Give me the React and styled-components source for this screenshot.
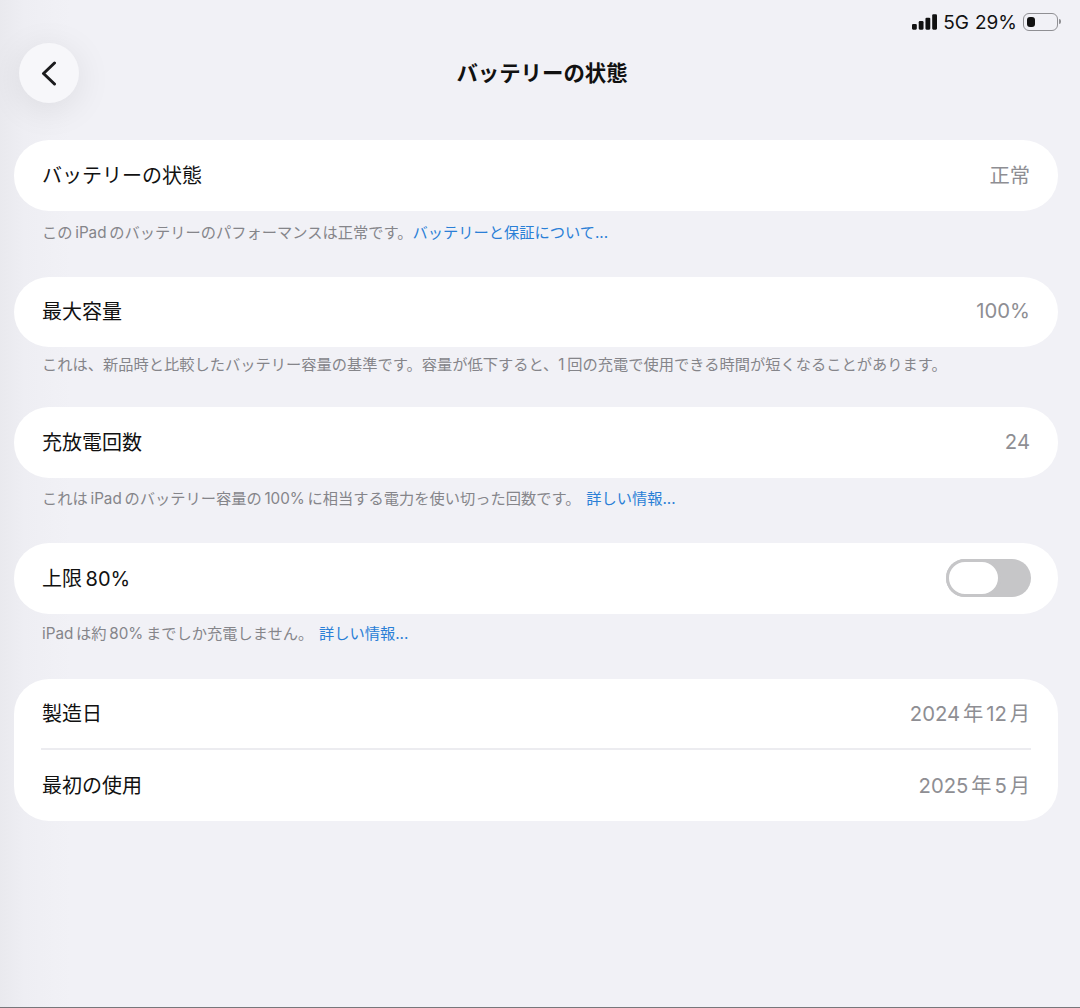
import React from 'react';
import styled, { createGlobalStyle } from 'styled-components';

const GlobalStyle = createGlobalStyle`
  html, body {
    margin: 0;
    padding: 0;
    background: #f1f1f6;
  }
  body {
    font-family: Inter, "Noto Sans CJK JP", sans-serif;
  }
  * {
    box-sizing: border-box;
  }
`;

const Page = styled.div`
  width: 1080px;
  height: 1008px;
  overflow: hidden;
  padding: 0 22px 0 14px;
  border-bottom: 1px solid #77777b;
  background: linear-gradient(to right, #e9e9ee 0, #eeeef3 24px, #f1f1f6 70px);
`;

const StatusBar = styled.div`
  height: 43px;
  padding-top: 1px;
  display: flex;
  align-items: center;
  justify-content: flex-end;
  gap: 6px;
  font-size: 19px;
  color: #111;
`;

const Battery = styled.div`
  position: relative;
  width: 35px;
  height: 18px;
  padding: 3px;
  border: 1.5px solid #8f8f93;
  border-radius: 6px;
  &::after {
    content: '';
    position: absolute;
    right: -4px;
    top: 5px;
    width: 2px;
    height: 5px;
    border-radius: 0 2px 2px 0;
    background: #8f8f93;
  }
`;

const BatteryLevel = styled.div`
  width: 8px;
  height: 100%;
  border-radius: 3px;
  background: #111;
`;

const Header = styled.header`
  display: grid;
  grid-template-columns: 60px 1fr 60px;
  align-items: center;
  height: 60px;
  margin: 0 -7px 37px 5px;
`;

const BackButton = styled.button`
  width: 60px;
  height: 60px;
  padding: 0;
  display: flex;
  align-items: center;
  justify-content: center;
  border: 0;
  border-radius: 50%;
  background: #f7f7fa;
  box-shadow: 0 6px 36px rgba(0, 0, 0, 0.09);
`;

const Title = styled.h1`
  margin: 0;
  text-align: center;
  font-size: 21.4px;
  line-height: 28px;
  font-weight: 700;
  color: #111;
`;

const Card = styled.section`
  background: #fff;
  border-radius: 35px;
`;

const Row = styled.div`
  height: ${props => props.$height || 71}px;
  padding: 0 28px 3px;
  display: flex;
  align-items: center;
  justify-content: space-between;
`;

const Label = styled.span`
  font-size: 20px;
  word-spacing: -2px;
  color: #111;
`;

const Value = styled.span`
  font-size: 20.3px;
  word-spacing: -2.8px;
  color: #8e8e93;
`;

const Divider = styled.div`
  height: 2px;
  margin: 0 27px;
  background: #ececf0;
`;

const Note = styled.p`
  margin: 0;
  height: ${props => props.$height}px;
  padding: ${props => props.$top}px 28px 0;
  font-size: 15.25px;
  line-height: 22px;
  word-spacing: -1.6px;
  color: #85858a;
  white-space: nowrap;
`;

const NoteLink = styled.a`
  margin-left: ${props => (props.$flush ? 0 : 3)}px;
  color: #2a7fd6;
`;

const Toggle = styled.div`
  width: 85px;
  height: 38px;
  margin: 1px -1px 0 0;
  border-radius: 19px;
  background: #c6c6c8;
`;

const ToggleThumb = styled.div`
  width: 55px;
  height: 38px;
  border: 3px solid #c6c6c8;
  border-radius: 19px;
  background: #fff;
`;

const SignalIcon = () => (
  <svg width="25" height="16" viewBox="0 0 26 16" fill="#111">
    <rect x="0" y="10" width="5" height="6" rx="1.2" />
    <rect x="7" y="7" width="5" height="9" rx="1.2" />
    <rect x="14" y="3.5" width="5" height="12.5" rx="1.2" />
    <rect x="21" y="0" width="5" height="16" rx="1.2" />
  </svg>
);

const ChevronLeft = () => (
  <svg width="16" height="25" viewBox="0 0 16 25" fill="none" stroke="#1b1b1d" strokeWidth="3" strokeLinecap="round" strokeLinejoin="round">
    <path d="M13.5 2 L2.5 12.5 L13.5 23" />
  </svg>
);

export default function App() {
  return (
    <>
      <GlobalStyle />
      <Page>
        <StatusBar>
          <SignalIcon />
          <span>5G</span>
          <span>29%</span>
          <Battery>
            <BatteryLevel />
          </Battery>
        </StatusBar>

        <Header>
          <BackButton aria-label="戻る">
            <ChevronLeft />
          </BackButton>
          <Title>バッテリーの状態</Title>
          <span />
        </Header>

        <Card>
          <Row>
            <Label>バッテリーの状態</Label>
            <Value>正常</Value>
          </Row>
        </Card>
        <Note $height={66} $top={11}>
          この iPad のバッテリーのパフォーマンスは正常です。<NoteLink $flush>バッテリーと保証について...</NoteLink>
        </Note>

        <Card>
          <Row $height={70}>
            <Label>最大容量</Label>
            <Value>100%</Value>
          </Row>
        </Card>
        <Note $height={60} $top={7}>
          これは、新品時と比較したバッテリー容量の基準です。容量が低下すると、1 回の充電で使用できる時間が短くなることがあります。
        </Note>

        <Card>
          <Row>
            <Label>充放電回数</Label>
            <Value>24</Value>
          </Row>
        </Card>
        <Note $height={65} $top={10}>
          これは iPad のバッテリー容量の 100% に相当する電力を使い切った回数です。 <NoteLink>詳しい情報...</NoteLink>
        </Note>

        <Card>
          <Row>
            <Label>上限 80%</Label>
            <Toggle>
              <ToggleThumb />
            </Toggle>
          </Row>
        </Card>
        <Note $height={65} $top={9}>
          iPad は約 80% までしか充電しません。 <NoteLink>詳しい情報...</NoteLink>
        </Note>

        <Card>
          <Row $height={69}>
            <Label>製造日</Label>
            <Value>2024 年 12 月</Value>
          </Row>
          <Divider />
          <Row>
            <Label>最初の使用</Label>
            <Value>2025 年 5 月</Value>
          </Row>
        </Card>
      </Page>
    </>
  );
}
